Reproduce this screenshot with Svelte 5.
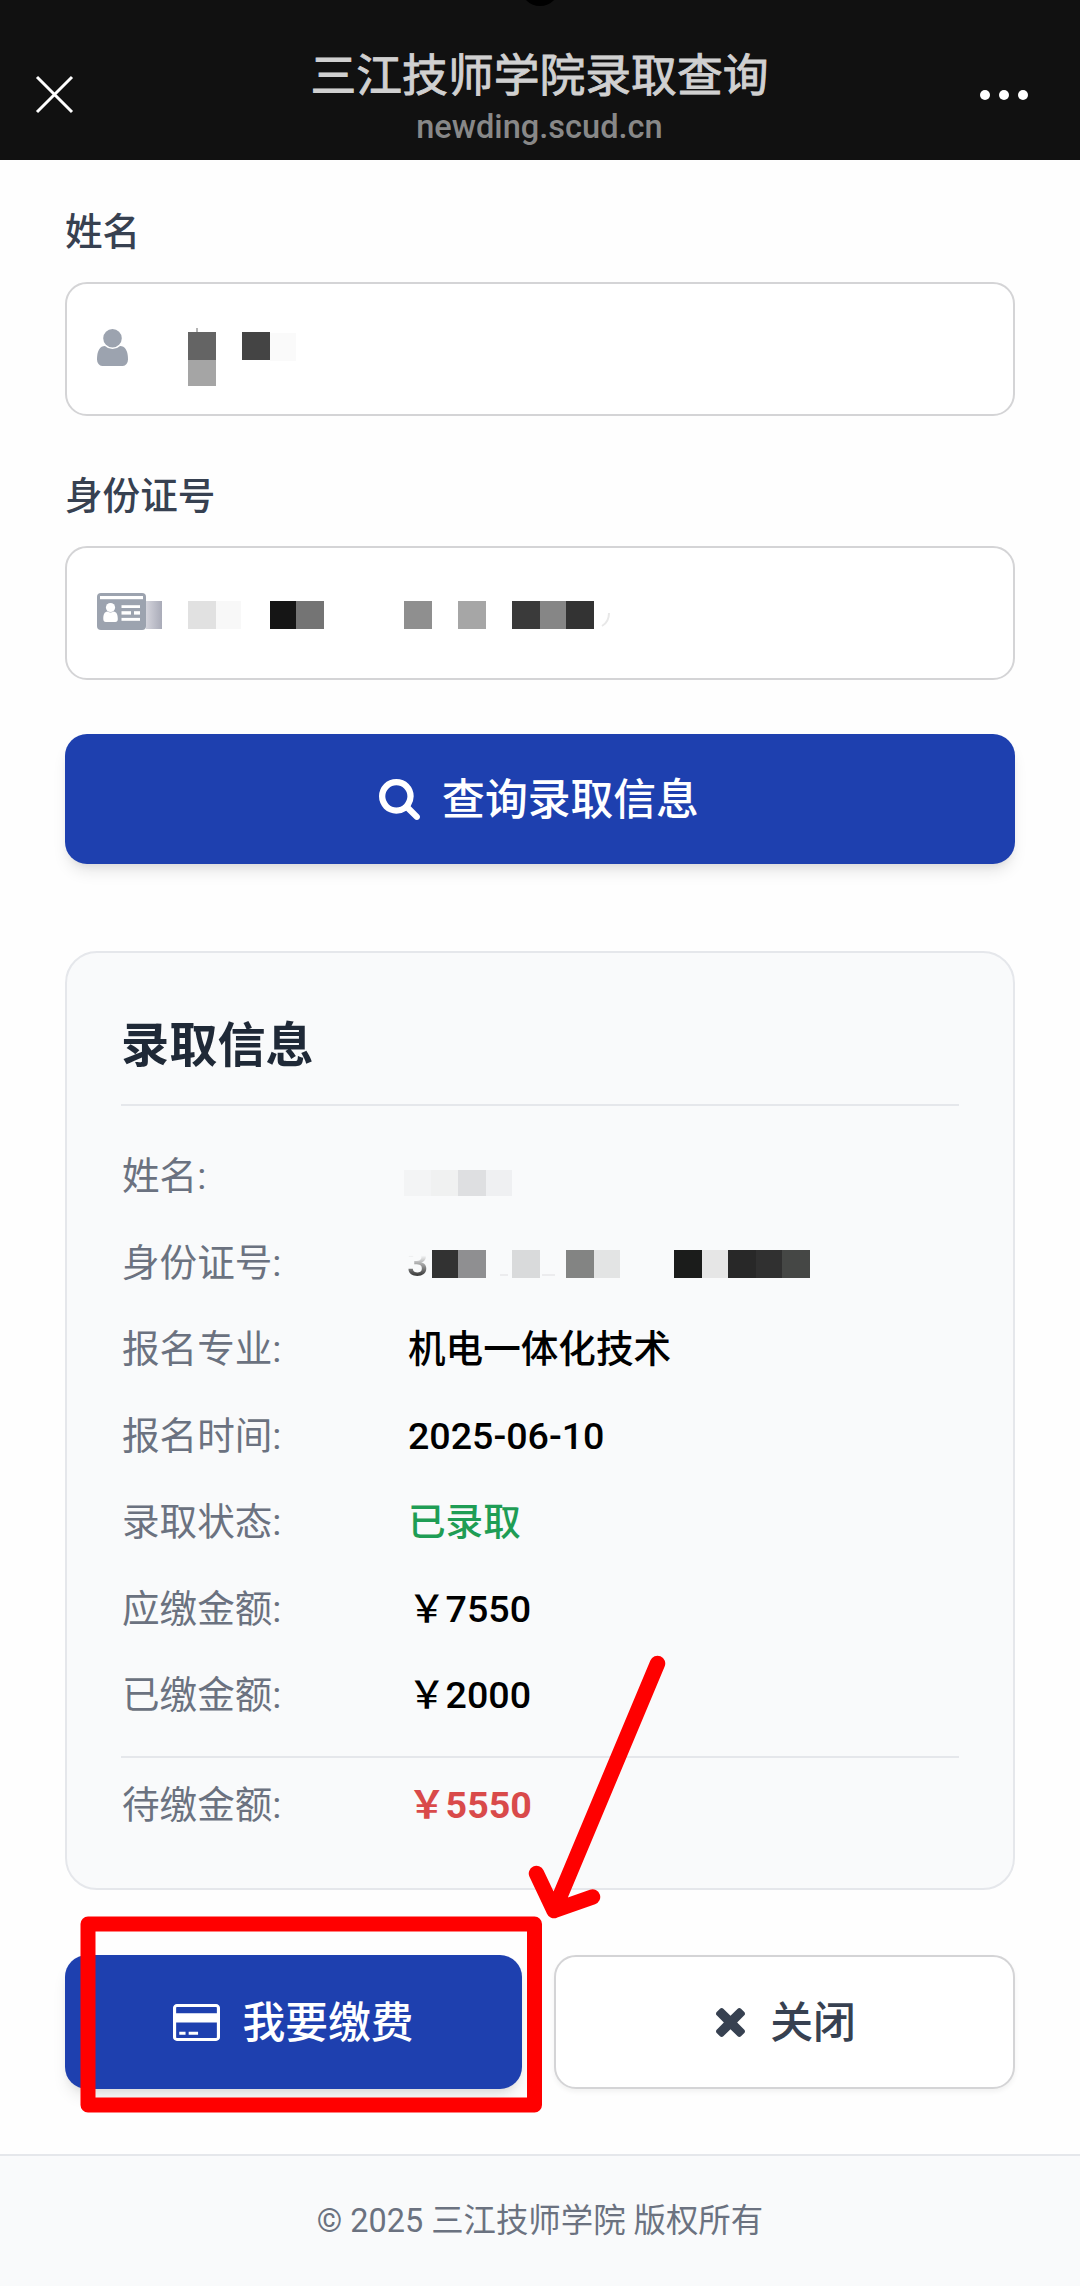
<script lang="ts">
  interface Block {
    x: number;
    w: number;
    color: string;
    y?: number;
    h?: number;
  }

  interface Row {
    label: string;
    value?: string;
    tone?: string;
    kind?: string;
  }

  // full-width yen sign
  const YEN = '\uFFE5';

  const nameBlocks: Block[] = [
    { x: 8, y: 1, w: 2, h: 5, color: '#b5b5b5' },
    { x: 0, y: 5, w: 28, h: 28, color: '#646464' },
    { x: 0, y: 33, w: 28, h: 26, color: '#a5a5a5' },
    { x: 54, y: 5, w: 28, h: 28, color: '#444444' },
    { x: 82, y: 6, w: 26, h: 28, color: '#fafafa' },
  ];

  const idBlocks: Block[] = [
    { x: 42, w: 28, color: '#e1e1e1' },
    { x: 70, w: 25, color: '#f8f8f8' },
    { x: 124, w: 26, color: '#151515' },
    { x: 150, w: 28, color: '#747474' },
    { x: 258, w: 28, color: '#8f8f8f' },
    { x: 312, w: 28, color: '#a6a6a6' },
    { x: 366, w: 28, color: '#3a3a3a' },
    { x: 394, w: 26, color: '#868686' },
    { x: 420, w: 28, color: '#333333' },
  ];

  const resultNameBlocks: Block[] = [
    { x: 0, w: 27, color: '#f3f4f5' },
    { x: 27, w: 27, color: '#f0f1f1' },
    { x: 54, w: 28, color: '#dedfe1' },
    { x: 82, w: 26, color: '#eff0f2' },
  ];

  const resultIdBlocks: Block[] = [
    { x: 0, w: 26, color: '#323232' },
    { x: 26, w: 28, color: '#8f8f91' },
    { x: 68, y: 24, w: 8, h: 2, color: '#ececee' },
    { x: 80, w: 28, color: '#d9dadb' },
    { x: 110, y: 24, w: 13, h: 2, color: '#ececee' },
    { x: 134, w: 28, color: '#838483' },
    { x: 162, w: 26, color: '#e3e4e4' },
    { x: 242, w: 28, color: '#1b1c1b' },
    { x: 270, w: 26, color: '#e6e6e6' },
    { x: 296, w: 28, color: '#282828' },
    { x: 324, w: 26, color: '#303030' },
    { x: 350, w: 28, color: '#454745' },
  ];

  const rows: Row[] = [
    { label: '姓名:', kind: 'name' },
    { label: '身份证号:', kind: 'id' },
    { label: '报名专业:', value: '机电一体化技术' },
    { label: '报名时间:', value: '2025-06-10' },
    { label: '录取状态:', value: '已录取', tone: 'ok' },
    { label: '应缴金额:', value: `${YEN}7550` },
    { label: '已缴金额:', value: `${YEN}2000` },
  ];
</script>

{#snippet mosaic(blocks: Block[], width: number, height: number)}
  <svg class="mosaic" {width} {height} shape-rendering="crispEdges" aria-hidden="true">
    {#each blocks as b}
      <rect x={b.x} y={b.y ?? 0} width={b.w} height={b.h ?? height} fill={b.color} />
    {/each}
  </svg>
{/snippet}

<div class="page">
  <header class="topbar">
    <div class="camera"></div>
    <svg class="close" width="40" height="40" viewBox="0 0 40 40" aria-label="关闭">
      <path d="M2 2l35 35M37 2L2 37" stroke="#fff" stroke-width="3" fill="none" />
    </svg>
    <div class="heading">
      <div class="title">三江技师学院录取查询</div>
      <div class="host">newding.scud.cn</div>
    </div>
    <svg class="more" width="50" height="12" viewBox="0 0 50 12" aria-label="更多">
      <circle cx="6" cy="6" r="5" fill="#fff" />
      <circle cx="25" cy="6" r="5" fill="#fff" />
      <circle cx="44" cy="6" r="5" fill="#fff" />
    </svg>
  </header>

  <main class="content">
    <div class="label">姓名</div>
    <div class="input">
      <svg class="icon" width="31" height="37" viewBox="0 128 1280 1536" preserveAspectRatio="none">
        <path d="M1280 1399q0 109-62.5 187t-150.5 78h-854q-88 0-150.5-78t-62.5-187q0-85 8.5-160.5t31.5-152 58.5-131 94-89 134.5-34.5q131 128 313 128t313-128q76 0 134.5 34.5t94 89 58.5 131 31.5 152 8.5 160.5zm-256-887q0 159-112.5 271.5t-271.5 112.5-271.5-112.5-112.5-271.5 112.5-271.5 271.5-112.5 271.5 112.5 112.5 271.5z" />
      </svg>
      <div class="name-value">{@render mosaic(nameBlocks, 108, 59)}</div>
    </div>

    <div class="label second">身份证号</div>
    <div class="input">
      <svg class="icon" width="49" height="37" viewBox="0 0 49 37">
        <rect width="49" height="37" rx="4" />
        <g fill="#fff">
          <rect x="3" y="3" width="43" height="3.2" />
          <path d="M6.3 26c0-4.5 1-7 4.2-7.4q3 2 6 0c3.2.4 4.3 2.9 4.3 7.4q0 3-2.5 3h-9.5q-2.5 0-2.5-3z" />
          <circle cx="13.5" cy="14.5" r="4.6" />
          <rect x="24.5" y="12.2" width="18.5" height="2.8" />
          <rect x="24.5" y="18.2" width="9.5" height="3.4" />
          <rect x="37" y="18.2" width="6" height="3.4" />
          <rect x="24.5" y="24.9" width="18.5" height="2.9" />
        </g>
      </svg>
      <div class="id-value">
        <div class="smudge"></div>
        {@render mosaic(idBlocks, 448, 28)}
        <svg class="tail" width="12" height="20" viewBox="0 0 12 20">
          <path d="M9 4q0 9-7 13" fill="none" stroke="#e8e8e8" stroke-width="2" />
        </svg>
      </div>
    </div>

    <button class="btn primary search">
      <svg width="41" height="41" viewBox="64 128 1664 1664">
        <path d="M1216 832q0-185-131.5-316.5t-316.5-131.5-316.5 131.5-131.5 316.5 131.5 316.5 316.5 131.5 316.5-131.5 131.5-316.5zm512 832q0 52-38 90t-90 38q-54 0-90-38l-343-342q-179 124-399 124-143 0-273.5-55.5t-225-150-150-225-55.5-273.5 55.5-273.5 150-225 225-150 273.5-55.5 273.5 55.5 225 150 150 225 55.5 273.5q0 220-124 399l343 343q37 37 37 90z" />
      </svg>
      <span>查询录取信息</span>
    </button>

    <section class="card">
      <h2>录取信息</h2>
      <div class="rows">
        {#each rows as row}
          <div class="row">
            <span class="key">{row.label}</span>
            {#if row.kind === 'name'}
              <span class="masked-name">{@render mosaic(resultNameBlocks, 108, 26)}</span>
            {:else if row.kind === 'id'}
              <span class="masked-id">
                <span class="faded">3</span>
                {@render mosaic(resultIdBlocks, 378, 28)}
              </span>
            {:else}
              <span class="value {row.tone ?? ''}">{row.value}</span>
            {/if}
          </div>
        {/each}
      </div>
      <div class="row due">
        <span class="key">待缴金额:</span>
        <span class="value owed">{YEN}5550</span>
      </div>
    </section>

    <div class="actions">
      <button class="btn primary pay">
        <svg width="47" height="37" viewBox="0 256 1920 1536" preserveAspectRatio="none">
          <path d="M1760 256q66 0 113 47t47 113v1216q0 66-47 113t-113 47h-1600q-66 0-113-47t-47-113v-1216q0-66 47-113t113-47h1600zm-1600 128q-13 0-22.5 9.5t-9.5 22.5v224h1664v-224q0-13-9.5-22.5t-22.5-9.5h-1600zm1600 1280q13 0 22.5-9.5t9.5-22.5v-608h-1664v608q0 13 9.5 22.5t22.5 9.5h1600zm-1504-128v-128h256v128h-256zm384 0v-128h384v128h-384z" />
        </svg>
        <span>我要缴费</span>
      </button>
      <button class="btn plain">
        <svg width="29" height="29" viewBox="302 366 1188 1188">
          <path d="M1490 1322q0 40-28 68l-136 136q-28 28-68 28t-68-28l-294-294-294 294q-28 28-68 28t-68-28l-136-136q-28-28-28-68t28-68l294-294-294-294q-28-28-28-68t28-68l136-136q28-28 68-28t68 28l294 294 294-294q28-28 68-28t68 28l136 136q28 28 28 68t-28 68l-294 294 294 294q28 28 28 68z" />
        </svg>
        <span>关闭</span>
      </button>
    </div>
  </main>

  <footer>© 2025 三江技师学院 版权所有</footer>

  <!-- hand-drawn markers over the pay button -->
  <svg class="marks" width="1080" height="2286" viewBox="0 0 1080 2286" fill="none" stroke="#f00" aria-hidden="true">
    <rect x="88" y="1924" width="446.5" height="181" stroke-width="15" stroke-linejoin="round" />
    <path d="M657.5 1663.5L554 1910.5M536.5 1873.5L554 1910.5L592.5 1897" stroke-width="15.5" stroke-linecap="round" stroke-linejoin="round" />
  </svg>
</div>

<style>
  :global(body) {
    margin: 0;
    background: #fff;
  }

  .page {
    position: relative;
    display: flex;
    flex-direction: column;
    box-sizing: border-box;
    width: 1080px;
    height: 2286px;
    overflow: hidden;
    font-family: Roboto, 'Noto Sans CJK SC', sans-serif;
    background: #fefefe;
  }

  .topbar {
    position: relative;
    display: flex;
    align-items: center;
    justify-content: space-between;
    box-sizing: border-box;
    height: 160px;
    padding: 30px 51px 0 35px;
    background: #111;
  }

  .camera {
    position: absolute;
    top: -35px;
    left: 520px;
    width: 40px;
    height: 41px;
    border-radius: 50%;
    background: #000;
  }

  .close {
    flex: none;
  }

  .heading {
    width: 600px;
    margin-left: 25px;
    padding-top: 4px;
    text-align: center;
  }

  .title {
    font-size: 45.8px;
    line-height: 60px;
    color: #d0d0d0;
    -webkit-text-stroke: 0.9px #d0d0d0;
  }

  .host {
    font-size: 32.6px;
    font-weight: 500;
    line-height: 41px;
    color: #888;
  }

  .content {
    display: flex;
    flex-direction: column;
    padding: 45px 65px 0;
  }

  .label {
    height: 54px;
    margin-bottom: 23px;
    font-size: 37.6px;
    font-weight: 500;
    line-height: 54px;
    color: #374151;
  }

  .label.second {
    margin-top: 53px;
  }

  .input {
    display: flex;
    align-items: center;
    box-sizing: border-box;
    height: 134px;
    padding-left: 30px;
    border: 2px solid #d4d4d6;
    border-radius: 22px;
    background: #fff;
  }

  .icon {
    flex: none;
    margin-bottom: 4px;
    fill: #9ca3af;
  }

  .mosaic {
    display: block;
    flex: none;
  }

  .name-value {
    margin: 15px 0 0 60px;
  }

  .id-value {
    display: flex;
    margin-top: 4px;
  }

  .smudge {
    width: 16px;
    height: 28px;
    margin-right: -16px;
    background: linear-gradient(to right, #d4d4dc, #a9abb8);
  }

  .tail {
    margin: 8px 0 0 6px;
  }

  .btn {
    display: flex;
    align-items: center;
    justify-content: center;
    box-sizing: border-box;
    padding: 0;
    border: none;
    border-radius: 22px;
    font-family: inherit;
    font-size: 42.8px;
    font-weight: 500;
    line-height: 64px;
  }

  .btn svg {
    flex: none;
    fill: currentColor;
  }

  .btn span {
    padding-top: 2px;
  }

  .primary {
    color: #fff;
    background: #1e40af;
    box-shadow: 0 10px 16px -3px rgba(0, 0, 0, 0.1), 0 5px 10px -5px rgba(0, 0, 0, 0.1);
  }

  .search {
    gap: 22px;
    height: 130px;
    margin-top: 54px;
    padding-right: 2px;
  }

  .card {
    box-sizing: border-box;
    height: 939px;
    margin-top: 87px;
    padding: 54px;
    border: 2px solid #e5e7eb;
    border-radius: 32px;
    background: #f9fafb;
  }

  h2 {
    height: 97px;
    margin: 0;
    border-bottom: 2px solid #e5e7eb;
    font-size: 48.2px;
    font-weight: 600;
    line-height: 77px;
    color: #1f2937;
  }

  .rows {
    display: flex;
    flex-direction: column;
    gap: 32.5px;
    padding: 43px 0 34px;
  }

  .row {
    display: grid;
    grid-template-columns: 286px 1fr;
    height: 54px;
    font-size: 37.6px;
    line-height: 54px;
  }

  .key {
    padding-left: 1px;
    color: #6b7280;
  }

  .value {
    padding-left: 1px;
    font-weight: 500;
    color: #000;
  }

  .ok {
    color: #1f9d55;
  }

  .masked-name {
    padding: 21px 0 0;
    margin-left: -3px;
  }

  .masked-id {
    display: flex;
    align-items: center;
    gap: 4px;
    padding-top: 3px;
  }

  .faded {
    width: 21px;
    height: 54px;
    margin-top: -3px;
    font-weight: 500;
    color: transparent;
    background: linear-gradient(to bottom, transparent 36%, #333 74%);
    background-clip: text;
  }

  .due {
    box-sizing: border-box;
    height: 76px;
    padding-top: 20px;
    border-top: 2px solid #e5e7eb;
  }

  .owed {
    font-weight: 700;
    color: #d94a4a;
  }

  .actions {
    display: grid;
    grid-template-columns: 457px 461px;
    gap: 32px;
    margin-top: 65px;
  }

  .actions .btn {
    height: 134px;
  }

  .pay {
    gap: 22px;
  }

  .plain {
    gap: 25px;
    padding-left: 3px;
    border: 2px solid #d4d4d6;
    color: #374151;
    background: #fff;
    box-shadow: 0 3px 5px rgba(0, 0, 0, 0.05);
  }

  footer {
    flex: 1;
    box-sizing: border-box;
    margin-top: 65px;
    padding-top: 42px;
    border-top: 2px solid #e5e7eb;
    font-size: 32.4px;
    line-height: 46px;
    text-align: center;
    color: #6b7280;
    background: #f9fafb;
  }

  .marks {
    position: absolute;
    top: 0;
    left: 0;
  }
</style>
